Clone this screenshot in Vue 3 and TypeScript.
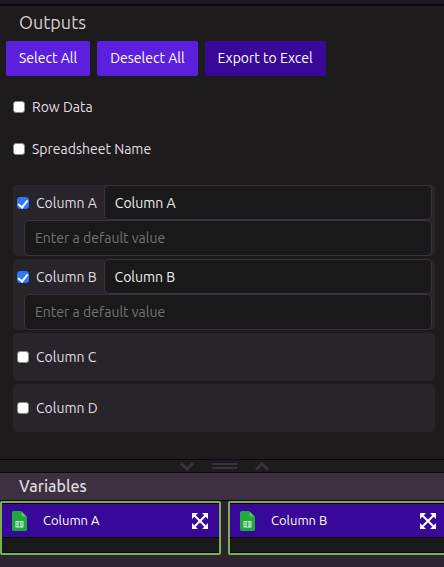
<script setup lang="ts">
import { reactive } from 'vue'

interface Toggle {
  id: string
  label: string
  checked: boolean
}

interface ColumnOutput extends Toggle {
  name: string
  fallback: string
}

const general = reactive<Toggle[]>([
  { id: 'row-data', label: 'Row Data', checked: false },
  { id: 'sheet-name', label: 'Spreadsheet Name', checked: false },
])

const columns = reactive<ColumnOutput[]>([
  { id: 'col-a', label: 'Column A', checked: true, name: 'Column A', fallback: '' },
  { id: 'col-b', label: 'Column B', checked: true, name: 'Column B', fallback: '' },
  { id: 'col-c', label: 'Column C', checked: false, name: 'Column C', fallback: '' },
  { id: 'col-d', label: 'Column D', checked: false, name: 'Column D', fallback: '' },
])

const variables: string[] = ['Column A', 'Column B']

function setAll(value: boolean): void {
  for (const item of [...general, ...columns]) item.checked = value
}
</script>

<template>
  <main class="app">
    <section class="outputs">
      <h2 class="title">Outputs</h2>
      <div class="actions">
        <button type="button" class="btn" @click="setAll(true)">Select All</button>
        <button type="button" class="btn" @click="setAll(false)">Deselect All</button>
        <button type="button" class="btn btn-dark">Export to Excel</button>
      </div>

      <div class="general">
        <div v-for="item in general" :key="item.id" class="general-row">
          <input :id="item.id" v-model="item.checked" type="checkbox" class="check" />
          <label :for="item.id">{{ item.label }}</label>
        </div>
      </div>

      <div class="columns">
        <div v-for="col in columns" :key="col.id" class="card">
          <div class="card-head">
            <input :id="col.id" v-model="col.checked" type="checkbox" class="check" />
            <label :for="col.id">{{ col.label }}</label>
            <input
              v-if="col.checked"
              v-model="col.name"
              type="text"
              class="field"
              :aria-label="col.label + ' name'"
            />
          </div>
          <input
            v-if="col.checked"
            v-model="col.fallback"
            type="text"
            class="field fallback"
            placeholder="Enter a default value"
            :aria-label="col.label + ' default value'"
          />
        </div>
      </div>
    </section>

    <div class="splitter">
      <button type="button" class="grip" aria-label="Collapse down">
        <svg width="14" height="9" viewBox="0 0 14 9"><path d="M1 1.200 7 7.200l6-6" /></svg>
      </button>
      <span class="bars"></span>
      <button type="button" class="grip" aria-label="Expand up">
        <svg width="14" height="9" viewBox="0 0 14 9"><path d="M1 7.800 7 1.800l6 6" /></svg>
      </button>
    </div>

    <section class="variables">
      <h2 class="variables-title">Variables</h2>
      <div class="tiles">
        <article v-for="name in variables" :key="name" class="tile">
          <header class="tile-head">
            <svg class="sheet" width="15" height="20" viewBox="0 0 15 20">
              <path d="M1.500 0H9l6 6v12.500a1.500 1.500 0 0 1-1.500 1.500h-12A1.500 1.500 0 0 1 0 18.500v-17A1.500 1.500 0 0 1 1.500 0Z" fill="#20a93f" />
              <path d="M9.500 .5 14.500 5.500h-4a1 1 0 0 1-1-1Z" fill="#5fc276" />
              <path d="M3.500 10h8v6.500h-8Z" fill="#c9f0cf" />
              <path d="M4 12h7M4 14.200h7M7.500 10.500v5.500" stroke="#20a93f" stroke-width=".8" />
            </svg>
            <span class="tile-name">{{ name }}</span>
            <button type="button" class="expand" :aria-label="'Expand ' + name">
              <svg width="16" height="16" viewBox="0 0 16 16">
                <path d="M2 2l12 12M14 2L2 14" stroke="#fff" stroke-width="2" />
                <path d="M.5 0H6L0 6V.5ZM10 0h6v6ZM16 10v6h-6ZM6 16H0v-6Z" fill="#fff" />
              </svg>
            </button>
          </header>
          <div class="tile-body"></div>
        </article>
      </div>
    </section>
  </main>
</template>

<style>
body {
  background: #2b2430;
}
</style>

<style scoped>
* {
  box-sizing: border-box;
}

.app {
  min-height: 100vh;
  overflow: hidden;
  background: #2b2430;
  color: #e2dfe3;
  font-family: Ubuntu, 'Noto Sans', sans-serif;
  font-size: 14px;
  line-height: 20px;
}

button {
  margin: 0;
  padding: 0;
  border: 0;
  background: none;
  font: inherit;
}

.outputs {
  padding: 4px 9px 27px 6px;
  background: #1e1b1d;
}

.title {
  margin: 0 -9px 0 -6px;
  padding: 4px 19px 7px;
  border-top: 2px solid #150218;
  color: #d3d0d3;
  font-size: 18px;
  font-weight: 400;
  line-height: 24px;
}

.actions {
  display: flex;
  gap: 7px;
}

.btn {
  height: 35px;
  padding: 0 13px 2px;
  border-radius: 2px;
  background: #5b20dd;
  color: #fff;
  white-space: nowrap;
  cursor: pointer;
}

.btn-dark {
  background: #380898;
}

.general {
  display: grid;
  gap: 22px;
  padding: 21px 7px 26px;
}

.general-row {
  display: flex;
  align-items: center;
  gap: 7px;
}

.check {
  display: grid;
  flex: none;
  place-items: center;
  width: 12px;
  height: 12px;
  margin: 0;
  border: 1px solid #8b8b8b;
  border-radius: 3px;
  appearance: none;
  background: #fff;
}

.check:checked {
  border-color: #2c78f6;
  background: #2c78f6;
}

.check:checked::after {
  width: 4px;
  height: 8px;
  margin-bottom: 2px;
  border: solid #fff;
  border-width: 0 2px 2px 0;
  content: '';
  transform: rotate(38deg);
}

.columns {
  display: grid;
  gap: 3px;
  padding-left: 7px;
}

.card {
  display: flex;
  flex-direction: column;
  justify-content: center;
  min-height: 48px;
  padding: 0 3px 0 4px;
  border-radius: 4px;
  background: #27242a;
}

.card-head {
  display: flex;
  align-items: center;
  gap: 7px;
}

.field {
  flex: 1;
  min-width: 0;
  height: 35px;
  padding: 0 10px;
  border: 1px solid #3d3040;
  border-radius: 5px;
  outline: 0;
  background: #19191a;
  color: #f1eff1;
  font: inherit;
}

.field::placeholder {
  color: #757475;
  opacity: 1;
}

.fallback {
  flex: none;
  height: 36px;
  margin-left: 7px;
}

.splitter {
  display: flex;
  align-items: center;
  justify-content: center;
  gap: 18px;
  height: 14px;
  padding-left: 5px;
  border: solid #150218;
  border-width: 1px 0;
  background: #1e1b1d;
}

.grip {
  display: flex;
  cursor: pointer;
}

.grip path {
  fill: none;
  stroke: #3d3040;
  stroke-width: 3;
}

.bars {
  width: 25px;
  height: 6px;
  border: solid #3d3040;
  border-width: 2px 0;
}

.variables-title {
  margin: 0;
  padding: 2px 19px;
  border-bottom: 1px solid #150218;
  background: #3d3040;
  color: #dedbdc;
  font-size: 16px;
  font-weight: 500;
  line-height: 23px;
}

.tiles {
  display: flex;
  gap: 7px;
}

.tile {
  flex: none;
  width: 221px;
  border: 2px solid #7cb04b;
  border-radius: 2px;
  background: #19191a;
}

.tile-head {
  display: flex;
  align-items: center;
  height: 35px;
  padding: 0 11px 0 10px;
  border: solid #08050b;
  border-width: 1px 0;
  background: #380898;
}

.tile-name {
  flex: 1;
  padding: 0 0 2px 16px;
  color: #fff;
  font-size: 13px;
}

.sheet {
  flex: none;
}

.expand {
  display: flex;
  cursor: pointer;
}

.tile-body {
  height: 15px;
  border-bottom: 1px solid #08050b;
}
</style>
